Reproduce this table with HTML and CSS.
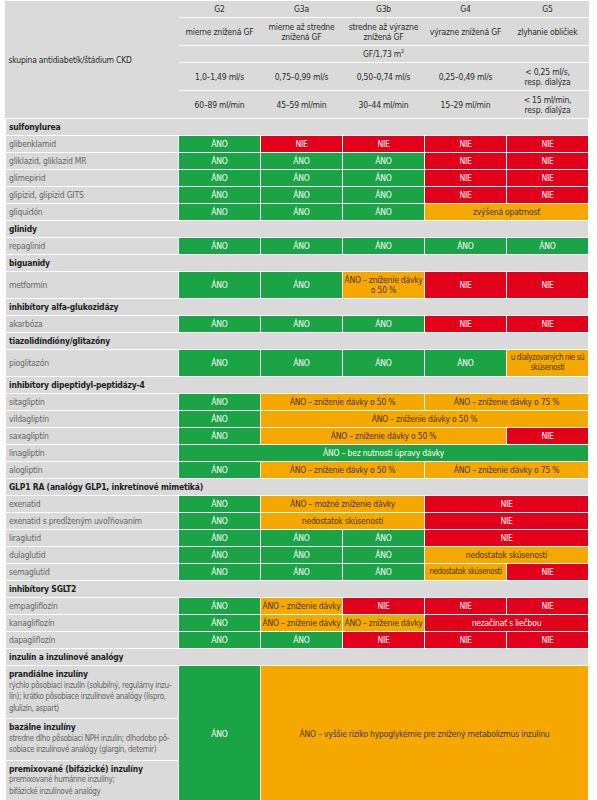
FILE: index.html
```html
<!DOCTYPE html>
<html lang="sk">
<head>
  <meta charset="UTF-8">
  <meta name="viewport" content="width=device-width, initial-scale=1.0">
  <title>Antidiabetiká a CKD</title>
  <link rel="stylesheet" href="styles.css">
</head>
<body>
  <table class="chart">
    <colgroup>
      <col class="col-label">
      <col class="col-stage">
      <col class="col-stage">
      <col class="col-stage">
      <col class="col-stage">
      <col class="col-stage">
    </colgroup>
    <tbody class="head">
      <tr>
        <td rowspan="5" class="head-label">skupina antidiabetík/štádium CKD</td>
        <td>G2</td>
        <td>G3a</td>
        <td>G3b</td>
        <td>G4</td>
        <td>G5</td>
      </tr>
      <tr class="two-line">
        <td>mierne znížená GF</td>
        <td>mierne až stredne<br>znížená GF</td>
        <td>stredne až výrazne<br>znížená GF</td>
        <td>výrazne znížená GF</td>
        <td>zlyhanie obličiek</td>
      </tr>
      <tr>
        <td colspan="5">GF/1,73 m<sup>2</sup></td>
      </tr>
      <tr class="two-line">
        <td>1,0–1,49 ml/s</td>
        <td>0,75–0,99 ml/s</td>
        <td>0,50–0,74 ml/s</td>
        <td>0,25–0,49 ml/s</td>
        <td>&lt; 0,25 ml/s,<br>resp. dialýza</td>
      </tr>
      <tr class="two-line">
        <td>60–89 ml/min</td>
        <td>45–59 ml/min</td>
        <td>30–44 ml/min</td>
        <td>15–29 ml/min</td>
        <td>&lt; 15 ml/min,<br>resp. dialýza</td>
      </tr>
    </tbody>
    <tbody>
      <tr><td colspan="6" class="group">sulfonylurea</td></tr>
      <tr>
        <td class="drug">glibenklamid</td>
        <td class="yes">ÁNO</td>
        <td class="no">NIE</td>
        <td class="no">NIE</td>
        <td class="no">NIE</td>
        <td class="no">NIE</td>
      </tr>
      <tr>
        <td class="drug">gliklazid, gliklazid MR</td>
        <td class="yes">ÁNO</td>
        <td class="yes">ÁNO</td>
        <td class="yes">ÁNO</td>
        <td class="no">NIE</td>
        <td class="no">NIE</td>
      </tr>
      <tr>
        <td class="drug">glimepirid</td>
        <td class="yes">ÁNO</td>
        <td class="yes">ÁNO</td>
        <td class="yes">ÁNO</td>
        <td class="no">NIE</td>
        <td class="no">NIE</td>
      </tr>
      <tr>
        <td class="drug">glipizid, glipizid GITS</td>
        <td class="yes">ÁNO</td>
        <td class="yes">ÁNO</td>
        <td class="yes">ÁNO</td>
        <td class="no">NIE</td>
        <td class="no">NIE</td>
      </tr>
      <tr>
        <td class="drug">gliquidón</td>
        <td class="yes">ÁNO</td>
        <td class="yes">ÁNO</td>
        <td class="yes">ÁNO</td>
        <td class="warn" colspan="2">zvýšená opatrnosť</td>
      </tr>

      <tr><td colspan="6" class="group">glinidy</td></tr>
      <tr>
        <td class="drug">repaglinid</td>
        <td class="yes">ÁNO</td>
        <td class="yes">ÁNO</td>
        <td class="yes">ÁNO</td>
        <td class="yes">ÁNO</td>
        <td class="yes">ÁNO</td>
      </tr>

      <tr><td colspan="6" class="group">biguanidy</td></tr>
      <tr>
        <td class="drug">metformín</td>
        <td class="yes">ÁNO</td>
        <td class="yes">ÁNO</td>
        <td class="warn">ÁNO – zníženie dávky<br>o 50 %</td>
        <td class="no">NIE</td>
        <td class="no">NIE</td>
      </tr>

      <tr><td colspan="6" class="group">inhibítory alfa-glukozidázy</td></tr>
      <tr>
        <td class="drug">akarbóza</td>
        <td class="yes">ÁNO</td>
        <td class="yes">ÁNO</td>
        <td class="yes">ÁNO</td>
        <td class="no">NIE</td>
        <td class="no">NIE</td>
      </tr>

      <tr><td colspan="6" class="group">tiazolidíndióny/glitazóny</td></tr>
      <tr>
        <td class="drug">pioglitazón</td>
        <td class="yes">ÁNO</td>
        <td class="yes">ÁNO</td>
        <td class="yes">ÁNO</td>
        <td class="yes">ÁNO</td>
        <td class="warn tight">u dialyzovaných nie sú<br>skúsenosti</td>
      </tr>

      <tr><td colspan="6" class="group">inhibítory dipeptidyl-peptidázy-4</td></tr>
      <tr>
        <td class="drug">sitagliptín</td>
        <td class="yes">ÁNO</td>
        <td class="warn" colspan="2">ÁNO – zníženie dávky o 50 %</td>
        <td class="warn" colspan="2">ÁNO – zníženie dávky o 75 %</td>
      </tr>
      <tr>
        <td class="drug">vildagliptín</td>
        <td class="yes">ÁNO</td>
        <td class="warn" colspan="4">ÁNO – zníženie dávky o 50 %</td>
      </tr>
      <tr>
        <td class="drug">saxagliptín</td>
        <td class="yes">ÁNO</td>
        <td class="warn" colspan="3">ÁNO – zníženie dávky o 50 %</td>
        <td class="no">NIE</td>
      </tr>
      <tr>
        <td class="drug">linagliptín</td>
        <td class="yes" colspan="5">ÁNO – bez nutnosti úpravy dávky</td>
      </tr>
      <tr>
        <td class="drug">alogliptín</td>
        <td class="yes">ÁNO</td>
        <td class="warn" colspan="2">ÁNO – zníženie dávky o 50 %</td>
        <td class="warn" colspan="2">ÁNO – zníženie dávky o 75 %</td>
      </tr>

      <tr><td colspan="6" class="group">GLP1 RA (analógy GLP1, inkretínové mimetiká)</td></tr>
      <tr>
        <td class="drug">exenatid</td>
        <td class="yes">ÁNO</td>
        <td class="warn" colspan="2">ÁNO – možné zníženie dávky</td>
        <td class="no" colspan="2">NIE</td>
      </tr>
      <tr>
        <td class="drug">exenatid s predĺženým uvoľňovaním</td>
        <td class="yes">ÁNO</td>
        <td class="warn" colspan="2">nedostatok skúseností</td>
        <td class="no" colspan="2">NIE</td>
      </tr>
      <tr>
        <td class="drug">liraglutid</td>
        <td class="yes">ÁNO</td>
        <td class="yes">ÁNO</td>
        <td class="yes">ÁNO</td>
        <td class="no" colspan="2">NIE</td>
      </tr>
      <tr>
        <td class="drug">dulaglutid</td>
        <td class="yes">ÁNO</td>
        <td class="yes">ÁNO</td>
        <td class="yes">ÁNO</td>
        <td class="warn" colspan="2">nedostatok skúseností</td>
      </tr>
      <tr>
        <td class="drug">semaglutid</td>
        <td class="yes">ÁNO</td>
        <td class="yes">ÁNO</td>
        <td class="yes">ÁNO</td>
        <td class="warn tight">nedostatok skúseností</td>
        <td class="no">NIE</td>
      </tr>

      <tr><td colspan="6" class="group">inhibítory SGLT2</td></tr>
      <tr>
        <td class="drug">empagliflozín</td>
        <td class="yes">ÁNO</td>
        <td class="warn">ÁNO – zníženie dávky</td>
        <td class="no">NIE</td>
        <td class="no">NIE</td>
        <td class="no">NIE</td>
      </tr>
      <tr>
        <td class="drug">kanagliflozín</td>
        <td class="yes">ÁNO</td>
        <td class="warn">ÁNO – zníženie dávky</td>
        <td class="warn">ÁNO – zníženie dávky</td>
        <td class="no" colspan="2">nezačínať s liečbou</td>
      </tr>
      <tr>
        <td class="drug">dapagliflozín</td>
        <td class="yes">ÁNO</td>
        <td class="yes">ÁNO</td>
        <td class="no">NIE</td>
        <td class="no">NIE</td>
        <td class="no">NIE</td>
      </tr>

      <tr><td colspan="6" class="group">inzulín a inzulínové analógy</td></tr>
      <tr>
        <td class="drug insulin">
          <b>prandiálne inzulíny</b><br>
          <span class="note">rýchlo pôsobiaci inzulín (solubilný, regulárny inzu-<br>lín); krátko pôsobiace inzulínové analógy (lispro,<br>glulizín, aspart)</span>
        </td>
        <td class="yes" rowspan="3">ÁNO</td>
        <td class="warn" colspan="4" rowspan="3">ÁNO – vyššie riziko hypoglykémie pre znížený metabolizmus inzulínu</td>
      </tr>
      <tr>
        <td class="drug insulin">
          <b>bazálne inzulíny</b><br>
          <span class="note">stredne dlho pôsobiaci NPH inzulín; dlhodobo pô-<br>sobiace inzulínové analógy (glargín, detemir)</span>
        </td>
      </tr>
      <tr>
        <td class="drug insulin">
          <b>premixované (bifázické) inzulíny</b><br>
          <span class="note">premixované humánne inzulíny;<br>bifázické inzulínové analógy</span>
        </td>
      </tr>
    </tbody>
  </table>
</body>
</html>
```

FILE: styles.css
```css
body {
  margin: 0;
  background: #fff;
  font-family: "DejaVu Sans Condensed", "Open Sans", sans-serif;
  font-stretch: 75%;
  font-size: 8.5px;
  letter-spacing: -0.2px;
  color: #333;
}

.chart {
  margin-left: 5px;
  width: 583px;
  table-layout: fixed;
  border-collapse: collapse;
  background: #dadada;
}

.col-label {
  width: 173px;
}

.col-stage {
  width: 82px;
}

.chart td {
  padding: 3px 1px;
  line-height: 10px;
  border: 1px solid #fff;
  text-align: center;
  vertical-align: middle;
  white-space: nowrap;
}

.head td {
  border-left: none;
  border-right: none;
  color: #2b2b2b;
}

.head .two-line td {
  padding-top: 4px;
}

.head sup {
  font-size: 5.5px;
  line-height: 0;
  vertical-align: 4px;
}

.head-label {
  text-align: left !important;
  padding-left: 3px !important;
}

.group {
  text-align: left !important;
  padding-left: 3px !important;
  font-weight: bold;
  color: #1e1e1e;
}

.drug {
  text-align: left !important;
  padding-left: 3px !important;
  color: #666;
}

.insulin {
  vertical-align: top !important;
  line-height: 10.5px !important;
  padding-top: 3px !important;
  padding-bottom: 4px !important;
}

.insulin b {
  color: #1e1e1e;
}

.note {
  font-size: 8px;
  letter-spacing: -0.35px;
}

.tight {
  font-size: 8px;
  letter-spacing: -0.4px;
}

.yes {
  background: #1ba445;
  color: #fff;
}

.no {
  background: #e2001a;
  color: #fff;
}

.warn {
  background: #f5a800;
  color: #4a3612;
}
```
